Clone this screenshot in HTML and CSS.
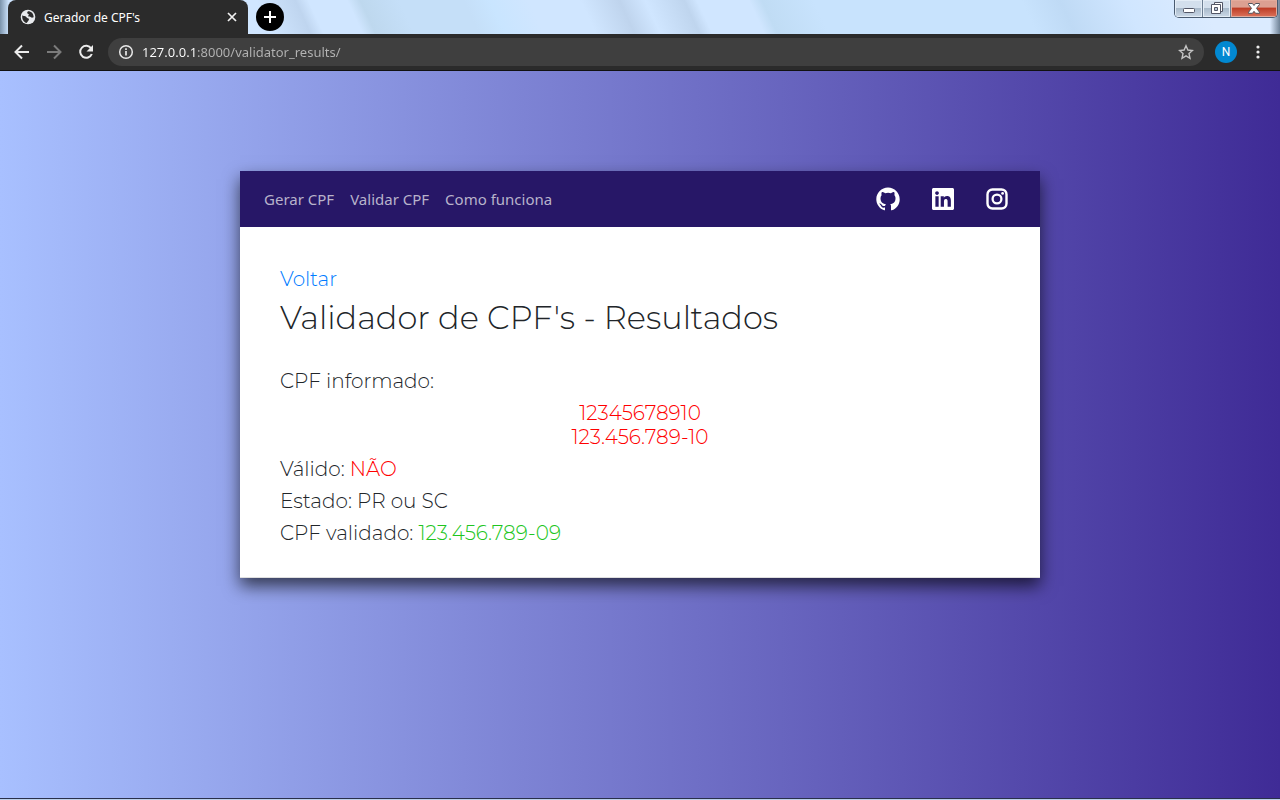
FILE: index.html
```html
<!DOCTYPE html>
<html lang="pt-BR">
<head>
<meta charset="utf-8">
<meta name="viewport" content="width=device-width, initial-scale=1">
<title>Gerador de CPF's</title>
<link rel="stylesheet" href="styles.css">
</head>
<body>
<header class="browser">
  <div class="titlebar">
    <div class="tab">
      <svg class="tab-icon" viewBox="0 0 24 24" aria-hidden="true"><circle cx="12" cy="12" r="11" fill="#e8eaed"/><path d="M3.500 9.500C5 11 6 10.500 8 11c2 .4 1.500 2.500 3.500 3 2 .5 2.500 1.500 1.500 3l-3 4C5.500 20.500 2.500 15 3.500 9.500zM12 3.500c-2 2-1.500 3.500.5 4 1.500.5.5 2-.5 3 1 1.500 3 .5 4.500 2 1 1 2 .8 4 0C20.500 7 17 3.500 12 3.500z" fill="#2b2b2b"/></svg>
      <span class="tab-title">Gerador de CPF's</span>
      <button class="plain" aria-label="Fechar guia"><svg width="10" height="10" viewBox="0 0 10 10"><path d="M1 1l8 8M9 1l-8 8" stroke="#f1f1f1" stroke-width="1.700"/></svg></button>
    </div>
    <button class="new-tab" aria-label="Nova guia"><svg width="12" height="12" viewBox="0 0 12 12"><path d="M6 0v12M0 6h12" stroke="#fff" stroke-width="2"/></svg></button>
    <div class="window-controls">
      <button class="win" aria-label="Minimizar"><svg width="14" height="16" viewBox="0 0 14 16"><rect x="1.500" y="7.500" width="11" height="4" rx="1" fill="#fff" stroke="#535666"/></svg></button>
      <button class="win" aria-label="Restaurar"><svg width="14" height="16" viewBox="0 0 14 16"><path d="M4.500 1.500h8v9h-8z" fill="#fff" stroke="#535666"/><path d="M1.500 3.500h9v9h-9z" fill="#fff" stroke="#535666"/><path d="M4.500 6.500h3v3h-3z" fill="#b9c8d8" stroke="#535666"/></svg></button>
      <button class="win win-close" aria-label="Fechar"><svg width="14" height="16" viewBox="0 0 14 16"><path d="M1.500 2.500h4L7 4.500l1.500-2h4v1L9.500 7.300l3 4v1h-4L7 10.300l-1.500 2h-4v-1l3-4-3-3.800z" fill="#fff" stroke="#54545c"/></svg></button>
    </div>
  </div>
  <div class="toolbar">
    <button class="plain" aria-label="Voltar"><svg width="16" height="16" viewBox="0 0 16 16"><path d="M15 8H2M8 1.500L1.500 8 8 14.500" fill="none" stroke="#ececec" stroke-width="2"/></svg></button>
    <button class="plain" aria-label="Avançar"><svg width="16" height="16" viewBox="0 0 16 16"><path d="M1 8h13M8 1.500L14.500 8 8 14.500" fill="none" stroke="#7b7b7b" stroke-width="2"/></svg></button>
    <button class="plain" aria-label="Recarregar"><svg width="16" height="16" viewBox="0 0 16 16"><path d="M13.200 4.500A6 6 0 1 0 13.800 10" fill="none" stroke="#ececec" stroke-width="2"/><path d="M15 1v6.500H8.500z" fill="#ececec"/></svg></button>
    <div class="omnibox">
      <svg width="16" height="16" viewBox="0 0 16 16" aria-hidden="true"><circle cx="8" cy="8" r="6.300" fill="none" stroke="#e8e8e8" stroke-width="1.500"/><path d="M8 7v4.500M8 4.300v1.700" stroke="#e8e8e8" stroke-width="1.700"/></svg>
      <input class="url" type="text" aria-label="Endereço" value="127.0.0.1:8000/validator_results/">
      <button class="plain" aria-label="Favoritar"><svg width="16" height="16" viewBox="0 0 16 16"><path d="M8 1.700l1.900 4.300 4.600.5-3.500 3.100 1 4.700L8 11.900l-4 2.400 1-4.700L1.500 6.500 6.100 6z" fill="none" stroke="#c4c4c4" stroke-width="1.400"/></svg></button>
    </div>
    <button class="avatar">N</button>
    <button class="plain" aria-label="Menu"><svg width="4" height="14" viewBox="0 0 4 14" fill="#ececec"><circle cx="2" cy="2" r="1.600"/><circle cx="2" cy="7" r="1.600"/><circle cx="2" cy="12" r="1.600"/></svg></button>
  </div>
</header>
<main class="page">
  <section class="card">
    <nav class="navbar">
      <a href="#gerar">Gerar CPF</a>
      <a href="#validar">Validar CPF</a>
      <a href="#como">Como funciona</a>
      <div class="social">
        <a href="#github" aria-label="GitHub"><svg width="24" height="24" viewBox="0 0 16 16" fill="#fff"><path d="M8 .3C3.700.3.200 3.800.200 8.100c0 3.400 2.200 6.300 5.300 7.400.400.1.500-.2.500-.4v-1.400c-2.200.5-2.600-1-2.600-1-.4-.9-.9-1.200-.9-1.200-.7-.5.1-.5.1-.5.8.1 1.200.8 1.200.8.700 1.200 1.800.9 2.300.7.1-.5.3-.9.500-1.100-1.700-.2-3.600-.9-3.600-3.900 0-.8.300-1.500.8-2.100-.1-.2-.4-1 .1-2.100 0 0 .7-.2 2.200.8a7.500 7.500 0 0 1 3.900 0c1.500-1 2.100-.8 2.100-.8.500 1.100.2 1.900.1 2.100.5.600.8 1.200.8 2.100 0 3-1.800 3.700-3.600 3.900.3.200.6.700.6 1.400v2.300c0 .2.100.5.500.4 3.100-1 5.300-3.900 5.300-7.400C15.800 3.800 12.300.3 8 .3z"/></svg></a>
        <a href="#linkedin" aria-label="LinkedIn"><svg width="22" height="22" viewBox="0 0 448 448" fill="#fff"><path d="M416 0H31.900C14.300 0 0 14.500 0 32.300v383.400C0 433.500 14.300 448 31.900 448H416c17.600 0 32-14.500 32-32.300V32.300C448 14.500 433.600 0 416 0zM135.400 384H69V170.200h66.500V384zm-33.200-243c-21.300 0-38.500-17.300-38.500-38.500S80.900 64 102.200 64c21.200 0 38.500 17.300 38.500 38.500 0 21.300-17.200 38.500-38.500 38.500zm282.100 243h-66.400V280c0-24.800-.5-56.700-34.500-56.700-34.600 0-39.900 27-39.900 54.900V384h-66.400V170.200h63.700v29.200h.9c8.900-16.800 30.600-34.500 62.900-34.500 67.200 0 79.700 44.300 79.700 101.900V384z"/></svg></a>
        <a href="#instagram" aria-label="Instagram"><svg width="22" height="22" viewBox="0 0 22 22"><rect x="1.500" y="1.500" width="19" height="19" rx="5" fill="none" stroke="#fff" stroke-width="2.400"/><circle cx="11" cy="11" r="4.400" fill="none" stroke="#fff" stroke-width="2.300"/><circle cx="16.600" cy="5.400" r="1.400" fill="#fff"/></svg></a>
      </div>
    </nav>
    <div class="content">
      <p><a class="back" href="#voltar">Voltar</a></p>
      <h1>Validador de CPF's - Resultados</h1>
      <p>CPF informado:</p>
      <p class="informed invalid">12345678910<br>123.456.789-10</p>
      <p>Válido: <span class="invalid">NÃO</span></p>
      <p>Estado: PR ou SC</p>
      <p>CPF validado: <span class="valid">123.456.789-09</span></p>
    </div>
  </section>
</main>
<footer class="taskbar-edge"></footer>
</body>
</html>
```
FILE: styles.css
```css
* { box-sizing: border-box; }
body { margin: 0; min-height: 100vh; display: flex; flex-direction: column; color: #212529; font-family: "Open Sans", sans-serif; }
button { font: inherit; cursor: pointer; }
svg { display: block; flex: none; }
.plain { padding: 0; border: 0; background: none; }
.titlebar {
  display: flex; height: 34px; padding-left: 8px;
  background:
    linear-gradient(90deg, #7b93ab 0, transparent 9px),
    linear-gradient(270deg, #6f8296 0, transparent 10px),
    linear-gradient(65deg, #d0e6ff 21%, #bfd5ef 24%, #d0e6ff 25%, #d0e6ff 28%, #bed8ee 29%, #c5dff8 32%, #c5dff8 37%, #c9e5ff 39%, #d0e6ff 42%, #d0e6ff 46%, #bfd4ed 49%, #d0e6ff 51%, #bfd5ee 54%, #d0e6ff 55%, #d0e6ff 59%, #c0dcf4 60%, #c8e3fd 64%, #c8e3fd 80%, #bfdaf5 83%, #d0e6ff 88%, #dbebff 94%);
}
.tab { display: flex; align-items: center; width: 240px; padding: 0 11px 0 12px; border-radius: 8px 8px 0 0; background: #2b2b2b; color: #fff; }
.tab-icon { width: 16px; height: 16px; margin-right: 8px; }
.tab-title { flex: 1; font-family: "Noto Sans", sans-serif; font-size: 12px; }
.new-tab { display: grid; place-items: center; width: 28px; height: 28px; margin: 3px 0 0 8px; padding: 0; border: 0; border-radius: 50%; background: #000; }
.window-controls { display: flex; height: 18px; margin: 0 2px 0 auto; border: 1px solid #4a5b70; border-top: 0; border-radius: 0 0 5px 5px; overflow: hidden; }
.win { display: grid; place-items: center; width: 28px; padding: 0; border: 0; border-right: 1px solid #6d7f93; background: linear-gradient(#d3dfec 0 45%, #a9bacb 50%, #ccd9e7); box-shadow: inset 0 0 0 1px #e4edf6; }
.win-close { width: 46px; border-right: 0; background: linear-gradient(#dca091 0 40%, #bf3f28 50%, #dc735c); box-shadow: inset 0 0 0 1px #e3ab9c; }
.toolbar { display: flex; align-items: center; gap: 16px; height: 37px; padding: 0 20px 0 14px; border-bottom: 1px solid #111; background: #2b2b2b; }
.omnibox { display: flex; align-items: center; flex: 1; gap: 8px; height: 28px; margin: 0 -5px 0 -2px; padding: 0 10px; border-radius: 14px; background: #3f3f3f; }
.url { flex: 1; min-width: 0; padding: 0; border: 0; outline: 0; color: transparent; background: linear-gradient(90deg, #fff 55px, #b4b4b4 55px); -webkit-background-clip: text; background-clip: text; font: 13px "Noto Sans", sans-serif; }
.avatar { width: 22px; height: 22px; margin-right: 3px; padding: 0; border: 0; border-radius: 50%; background: #0288d1; color: #fff; font: 12px Roboto, sans-serif; }
.page { flex: 1; padding: 100px 16px; background: linear-gradient(90deg, #a8c0ff, #3f2b96); }
.card { max-width: 800px; margin: 0 auto; border-bottom: 1px solid #dfdfdf; background: #fff; box-shadow: 0 8px 16px rgba(0, 0, 0, 0.65); }
.navbar { display: flex; align-items: center; gap: 16px; height: 56px; padding: 0 32px 0 24px; background: #271767; }
.navbar a { color: #b8b3cb; font: 15px "Noto Sans", sans-serif; text-decoration: none; }
.social { display: flex; align-items: center; gap: 32px; margin-left: auto; }
.content { padding: 40px 40px 24px; font: 350 20px/24px Montserrat, sans-serif; }
.content p { margin: 0 0 8px; }
.content h1 { margin: 0 0 32px; font-size: 32px; font-weight: 350; line-height: 38px; }
.content .informed { text-align: center; }
.back { color: #007bff; text-decoration: none; }
.invalid { color: #f00; }
.valid { color: #20c520; }
.taskbar-edge { height: 2px; border-top: 1px solid #29304a; background: #bcd0ea; }
```
